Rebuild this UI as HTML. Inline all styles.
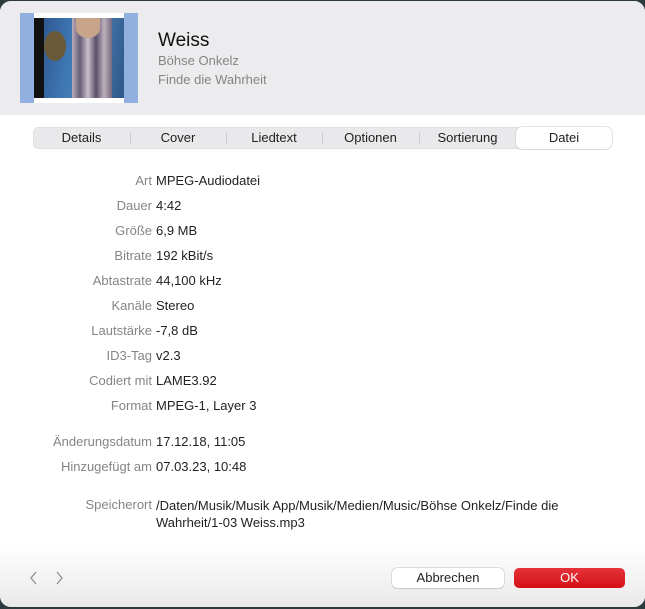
<!DOCTYPE html>
<html><head><meta charset="utf-8"><style>
html,body{margin:0;padding:0;width:645px;height:609px;overflow:hidden;background:#2c3a3e;font-family:"Liberation Sans",sans-serif}
.win{position:absolute;left:0;top:1px;width:645px;height:606px;background:#fff;border-radius:11px;overflow:hidden}
.hdr{position:absolute;left:0;top:0;width:645px;height:114px;background:#ececee}
.a{position:absolute;white-space:nowrap;font-size:13px;line-height:16px}
.l{right:493px;color:#858585;text-align:right}
.v{left:156px;color:#222}
.tabs{position:absolute;left:33px;top:126px;width:579px;height:22px;background:#e9e9eb;border-radius:6px;box-shadow:inset 0 0 0 0.5px #d6d6d8}
.tab{position:absolute;top:0;height:22px;line-height:22px;text-align:center;font-size:13px;color:#222}
.sep{position:absolute;top:5px;width:1px;height:12px;background:#cfcfd1}
.btn{position:absolute;top:567px;height:20px;line-height:20px;border-radius:5px;text-align:center;font-size:13px}
</style></head><body>
<div class="win">
<div class="hdr"></div>
<div style="position:absolute;left:0;top:452px;width:645px;height:154px;background:linear-gradient(#fff 0,#fff 60%,#e9e9ea 100%)"></div>
<!-- artwork -->
<div style="position:absolute;left:20px;top:12px;width:118px;height:90px;background:#91afdf"></div>
<div style="position:absolute;left:34px;top:12px;width:90px;height:90px;background:#fff"></div>
<div style="position:absolute;left:34px;top:17px;width:90px;height:80px;background:linear-gradient(100deg,#2b4f86 0%,#3f78b5 40%,#4a7fb0 60%,#2e5689 100%)"></div>
<div style="position:absolute;left:34px;top:17px;width:10px;height:80px;background:#111"></div>
<div style="position:absolute;left:72px;top:17px;width:40px;height:80px;background:linear-gradient(90deg,#c9b3b8,#6a5a72,#d8c8cc,#5b4a63,#cbb7bd,#7b6b7f);opacity:.9"></div>
<div style="position:absolute;left:44px;top:30px;width:22px;height:30px;background:#6b5a3a;border-radius:50%"></div>
<div style="position:absolute;left:76px;top:17px;width:24px;height:20px;background:#c8a58a;border-radius:0 0 50% 50%"></div>
<div class="a" style="left:158px;top:29px;font-size:19px;line-height:22px;color:#111">Weiss</div>
<div class="a" style="left:158px;top:52px;color:#858585">Böhse Onkelz</div>
<div class="a" style="left:158px;top:71px;color:#858585">Finde die Wahrheit</div>
<div class="tabs">
<div class="tab" style="left:0;width:97px">Details</div>
<div class="sep" style="left:97px"></div>
<div class="tab" style="left:97px;width:96px">Cover</div>
<div class="sep" style="left:193px"></div>
<div class="tab" style="left:193px;width:96px">Liedtext</div>
<div class="sep" style="left:289px"></div>
<div class="tab" style="left:289px;width:97px">Optionen</div>
<div class="sep" style="left:386px"></div>
<div class="tab" style="left:386px;width:97px">Sortierung</div>
<div class="tab" style="left:483px;width:96px;background:#fff;border-radius:6px;box-shadow:0 0 0 0.5px #c8c8ca,0 1px 1px rgba(0,0,0,.1)">Datei</div>
</div>
<div class="a l" style="top:172px">Art</div><div class="a v" style="top:172px">MPEG-Audiodatei</div>
<div class="a l" style="top:197px">Dauer</div><div class="a v" style="top:197px">4:42</div>
<div class="a l" style="top:222px">Größe</div><div class="a v" style="top:222px">6,9 MB</div>
<div class="a l" style="top:247px">Bitrate</div><div class="a v" style="top:247px">192 kBit/s</div>
<div class="a l" style="top:272px">Abtastrate</div><div class="a v" style="top:272px">44,100 kHz</div>
<div class="a l" style="top:297px">Kanäle</div><div class="a v" style="top:297px">Stereo</div>
<div class="a l" style="top:322px">Lautstärke</div><div class="a v" style="top:322px">-7,8 dB</div>
<div class="a l" style="top:347px">ID3-Tag</div><div class="a v" style="top:347px">v2.3</div>
<div class="a l" style="top:372px">Codiert mit</div><div class="a v" style="top:372px">LAME3.92</div>
<div class="a l" style="top:397px">Format</div><div class="a v" style="top:397px">MPEG-1, Layer 3</div>
<div class="a l" style="top:433px">Änderungsdatum</div><div class="a v" style="top:433px">17.12.18, 11:05</div>
<div class="a l" style="top:458px">Hinzugefügt am</div><div class="a v" style="top:458px">07.03.23, 10:48</div>
<div class="a l" style="top:496px">Speicherort</div>
<div class="a v" style="top:496px;line-height:17px;white-space:normal;width:440px">/Daten/Musik/Musik App/Musik/Medien/Music/Böhse Onkelz/Finde die Wahrheit/1-03 Weiss.mp3</div>
<svg style="position:absolute;left:28px;top:570px" width="40" height="14"><path d="M8 1 L3 7 L8 13" fill="none" stroke="#8a8a8a" stroke-width="1.2"/><path d="M29 1 L34 7 L29 13" fill="none" stroke="#8a8a8a" stroke-width="1.2"/></svg>
<div class="btn" style="left:392px;width:112px;background:#fff;color:#222;box-shadow:0 0 0 0.5px #c4c4c6,0 1px 1px rgba(0,0,0,.15)">Abbrechen</div>
<div class="btn" style="left:514px;width:111px;background:linear-gradient(#e6323a,#d41016);color:#fff">OK</div>
</div>
</body></html>
